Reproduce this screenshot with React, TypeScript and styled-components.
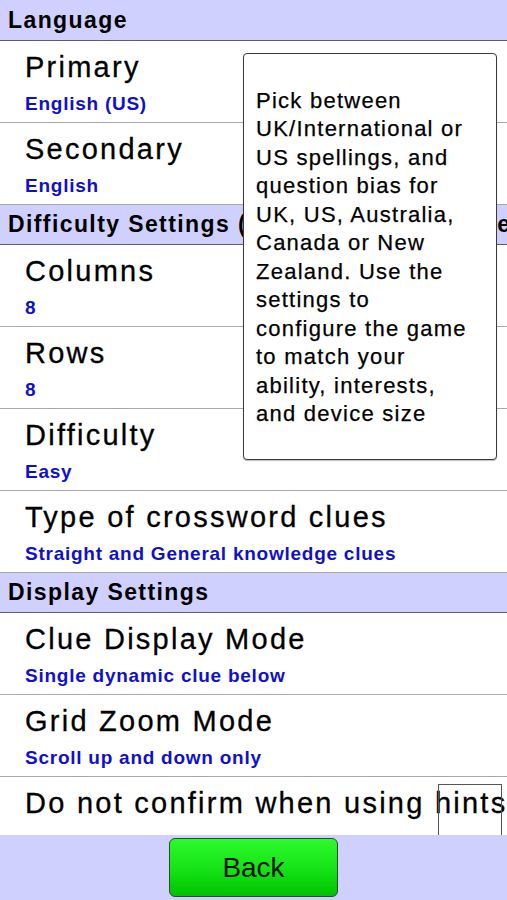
import React from "react";
import styled, { createGlobalStyle } from "styled-components";

const GlobalStyle = createGlobalStyle`
  html, body {
    margin: 0;
    padding: 0;
    background: #ffffff;
  }
  body {
    font-family: "Liberation Sans", Arial, sans-serif;
  }
`;

const LAVENDER = "#d0d0ff";

const Screen = styled.div`
  position: relative;
  display: flex;
  flex-direction: column;
  width: 100%;
  height: 100vh;
  overflow: hidden;
  background: #ffffff;
`;

const List = styled.div`
  flex: 1;
  min-height: 0;
  overflow: hidden;
`;

const SectionHeader = styled.div`
  height: 39px;
  line-height: 39px;
  padding-left: 8px;
  background: ${LAVENDER};
  border-bottom: 1px solid #5c5c6a;
  font-size: 23px;
  font-weight: bold;
  letter-spacing: 1.4px;
  color: #000;
  white-space: nowrap;
  overflow: hidden;

  &:first-child {
    height: 40px;
    line-height: 40px;
  }
`;

const SettingRow = styled.div`
  position: relative;
  height: 72px;
  padding: 9px 0 0 25px;
  border-bottom: 1px solid #a8a8a8;
  white-space: nowrap;
`;

const RowTitle = styled.div`
  font-size: 29px;
  line-height: 34px;
  letter-spacing: 2.25px;
  color: #000;
  -webkit-text-stroke: 0.3px #000;
`;

const RowValue = styled.div`
  margin-top: 8px;
  font-size: 19px;
  line-height: 24px;
  font-weight: bold;
  letter-spacing: 0.75px;
  color: #1010cc;
`;

const CheckBox = styled.span`
  position: absolute;
  top: 7px;
  right: 5px;
  width: 64px;
  height: 64px;
  border: 1px solid #555;
  box-sizing: border-box;
`;

const Tip = styled.div`
  position: absolute;
  left: 243px;
  top: 53px;
  width: 254px;
  height: 407px;
  box-sizing: border-box;
  padding: 33px 0 0 12px;
  background: #ffffff;
  border: 1px solid #3a3a3a;
  border-radius: 4px;
  box-shadow: 0 1px 1px rgba(0, 0, 0, 0.25);
  font-size: 22px;
  line-height: 28.45px;
  letter-spacing: 1.25px;
  color: #000;
  -webkit-text-stroke: 0.25px #000;
  white-space: nowrap;
`;

const BottomBar = styled.div`
  flex: 0 0 65px;
  display: flex;
  justify-content: center;
  align-items: flex-start;
  padding-top: 3px;
  box-sizing: border-box;
  background: ${LAVENDER};
`;

const BackButton = styled.button`
  width: 169px;
  height: 59px;
  border: 1px solid #2e4a2e;
  border-radius: 6px;
  background: linear-gradient(to bottom, #2cfa2c 0%, #14e214 55%, #00c200 100%);
  font-family: "Liberation Sans", Arial, sans-serif;
  font-size: 28px;
  color: #111;
  padding: 0;
  cursor: pointer;
`;

type Setting = { title: string; value?: string; checkbox?: boolean };
type Section = { header: string; items: Setting[] };

const sections: Section[] = [
  {
    header: "Language",
    items: [
      { title: "Primary", value: "English (US)" },
      { title: "Secondary", value: "English" },
    ],
  },
  {
    header: "Difficulty Settings (applies to new puzzle)",
    items: [
      { title: "Columns", value: "8" },
      { title: "Rows", value: "8" },
      { title: "Difficulty", value: "Easy" },
      { title: "Type of crossword clues", value: "Straight and General knowledge clues" },
    ],
  },
  {
    header: "Display Settings",
    items: [
      { title: "Clue Display Mode", value: "Single dynamic clue below" },
      { title: "Grid Zoom Mode", value: "Scroll up and down only" },
      { title: "Do not confirm when using hints", checkbox: true },
    ],
  },
];

const tipLines = [
  "Pick between",
  "UK/International or",
  "US spellings, and",
  "question bias for",
  "UK, US, Australia,",
  "Canada or New",
  "Zealand. Use the",
  "settings to",
  "configure the game",
  "to match your",
  "ability, interests,",
  "and device size",
];

export default function App() {
  return (
    <>
      <GlobalStyle />
      <Screen>
        <List>
          {sections.map((section) => (
            <React.Fragment key={section.header}>
              <SectionHeader>{section.header}</SectionHeader>
              {section.items.map((item) => (
                <SettingRow key={item.title}>
                  <RowTitle>{item.title}</RowTitle>
                  {item.value && <RowValue>{item.value}</RowValue>}
                  {item.checkbox && <CheckBox />}
                </SettingRow>
              ))}
            </React.Fragment>
          ))}
        </List>
        <BottomBar>
          <BackButton>Back</BackButton>
        </BottomBar>
        <Tip>
          {tipLines.map((line, i) => (
            <React.Fragment key={i}>
              {line}
              {i < tipLines.length - 1 && <br />}
            </React.Fragment>
          ))}
        </Tip>
      </Screen>
    </>
  );
}
